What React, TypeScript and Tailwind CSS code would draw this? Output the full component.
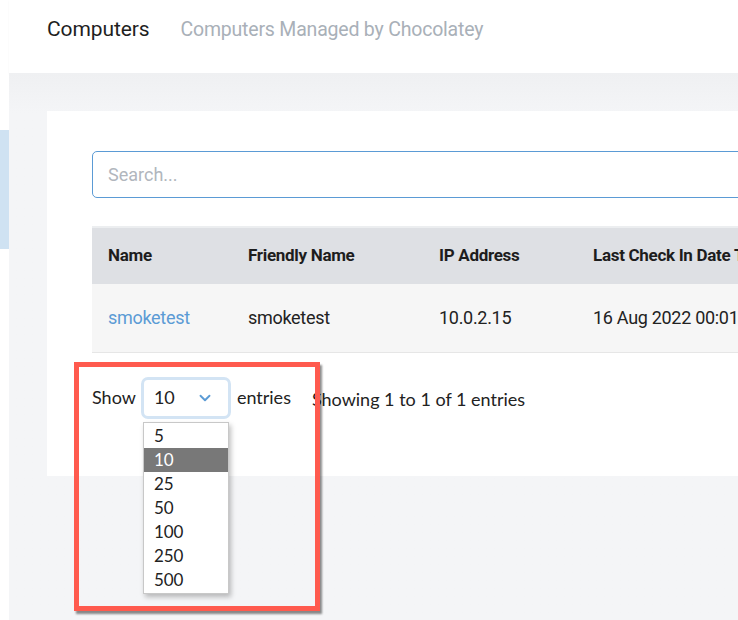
import { ChevronDown } from "lucide-react";

const pageSizes = [5, 10, 25, 50, 100, 250, 500];

const columns = [
  { label: "Name", width: "w-[140px]" },
  { label: "Friendly Name", width: "w-[191px]" },
  { label: "IP Address", width: "w-[154px]" },
  { label: "Last Check In Date Time", width: "w-[260px]" },
  { label: "Actions", width: "w-[200px]" },
];

const PageSizeSelect = () => {
  return (
    <div className="relative">
      <div className="flex h-[42px] w-[90px] items-center justify-between rounded-[7px] border-[3px] border-[#d3e4f4] bg-white pl-[10px] pr-[14px] text-[18px] text-[#222]">
        <span>10</span>
        <ChevronDown className="h-[18px] w-[18px] text-[#5b9bd5]" strokeWidth={2.5} />
      </div>
      {/* open native list */}
      <ul className="absolute left-[2px] top-[45px] z-10 w-[86px] border border-[#c8c8c8] bg-white py-px shadow-[2px_3px_5px_rgba(0,0,0,0.25)]">
        {pageSizes.map((size) => (
          <li
            key={size}
            className={
              size === 10
                ? "h-6 bg-[#787878] pl-[10px] text-[17px] leading-6 text-white"
                : "h-6 pl-[10px] text-[17px] leading-6 text-[#222]"
            }
          >
            {size}
          </li>
        ))}
      </ul>
    </div>
  );
};

const App = () => {
  return (
    <div
      className="relative flex h-[620px] w-[738px] overflow-hidden bg-[#f4f5f7]"
      style={{ fontFamily: 'Roboto, "Noto Sans", sans-serif' }}
    >
      {/* sidebar edge */}
      <aside className="w-[9px] shrink-0 bg-white pt-[130px]">
        <div className="h-[119px] bg-[#cfe2f2]" />
      </aside>

      <div className="flex min-w-0 flex-1 flex-col">
        <header className="flex h-[73px] shrink-0 items-center gap-[31px] bg-white pb-[13px] pl-[38px] shadow-[0_1px_2px_rgba(0,0,0,0.04)]">
          <h1 className="text-[21px] tracking-[-0.1px] text-[#1f1f1f]">Computers</h1>
          <p className="text-[19.5px] tracking-[-0.2px] text-[#a9b0b8]">Computers Managed by Chocolatey</p>
        </header>

        <main className="flex-1 bg-gradient-to-b from-[#eff0f2] to-[#f4f5f7] to-[40px] pl-[38px] pt-[38px]">
          <section className="h-[365px] w-[900px] bg-white pl-[45px] pt-[40px]">
            <div className="flex h-[47px] items-center rounded-[5px] border border-[#5b9bd5] pl-[15px] text-[18px] text-[#b1b6bd]">
              Search...
            </div>

            <table className="mt-[28px] w-[945px] table-fixed border-collapse text-[18px] tracking-[-0.3px]">
              <thead>
                <tr className="h-[57px] border-t-2 border-[#eceef0] bg-[#dee0e4] text-left text-[17px] text-[#1d1d1d]">
                  {columns.map((col) => (
                    <th key={col.label} className={`${col.width} pl-4 font-bold`}>
                      {col.label}
                    </th>
                  ))}
                </tr>
              </thead>
              <tbody>
                <tr className="h-[68px] border-b border-[#e6e6e6] bg-[#f6f6f6] text-[#222]">
                  <td className="pl-4 text-[#5b9bd5]">smoketest</td>
                  <td className="pl-4">smoketest</td>
                  <td className="pl-4">10.0.2.15</td>
                  <td className="pl-4">16 Aug 2022 00:01:22</td>
                  <td className="pl-4" />
                </tr>
              </tbody>
            </table>

            <div
              className="mt-[24px] flex items-center text-[18px] text-[#222]"
              style={{ fontFamily: "Lato, sans-serif" }}
            >
              <span className="mr-[5px]">Show</span>
              <PageSizeSelect />
              <span className="ml-[6px] mr-[21px]">entries</span>
              <span className="mt-[4px]">Showing 1 to 1 of 1 entries</span>
            </div>
          </section>
        </main>
      </div>

      {/* screenshot annotation */}
      <div className="absolute left-[74px] top-[362px] h-[249px] w-[246px] border-[5px] border-[#ff5a4e] shadow-[2px_3px_2px_rgba(0,0,0,0.45)]" />
    </div>
  );
};

export default App;
